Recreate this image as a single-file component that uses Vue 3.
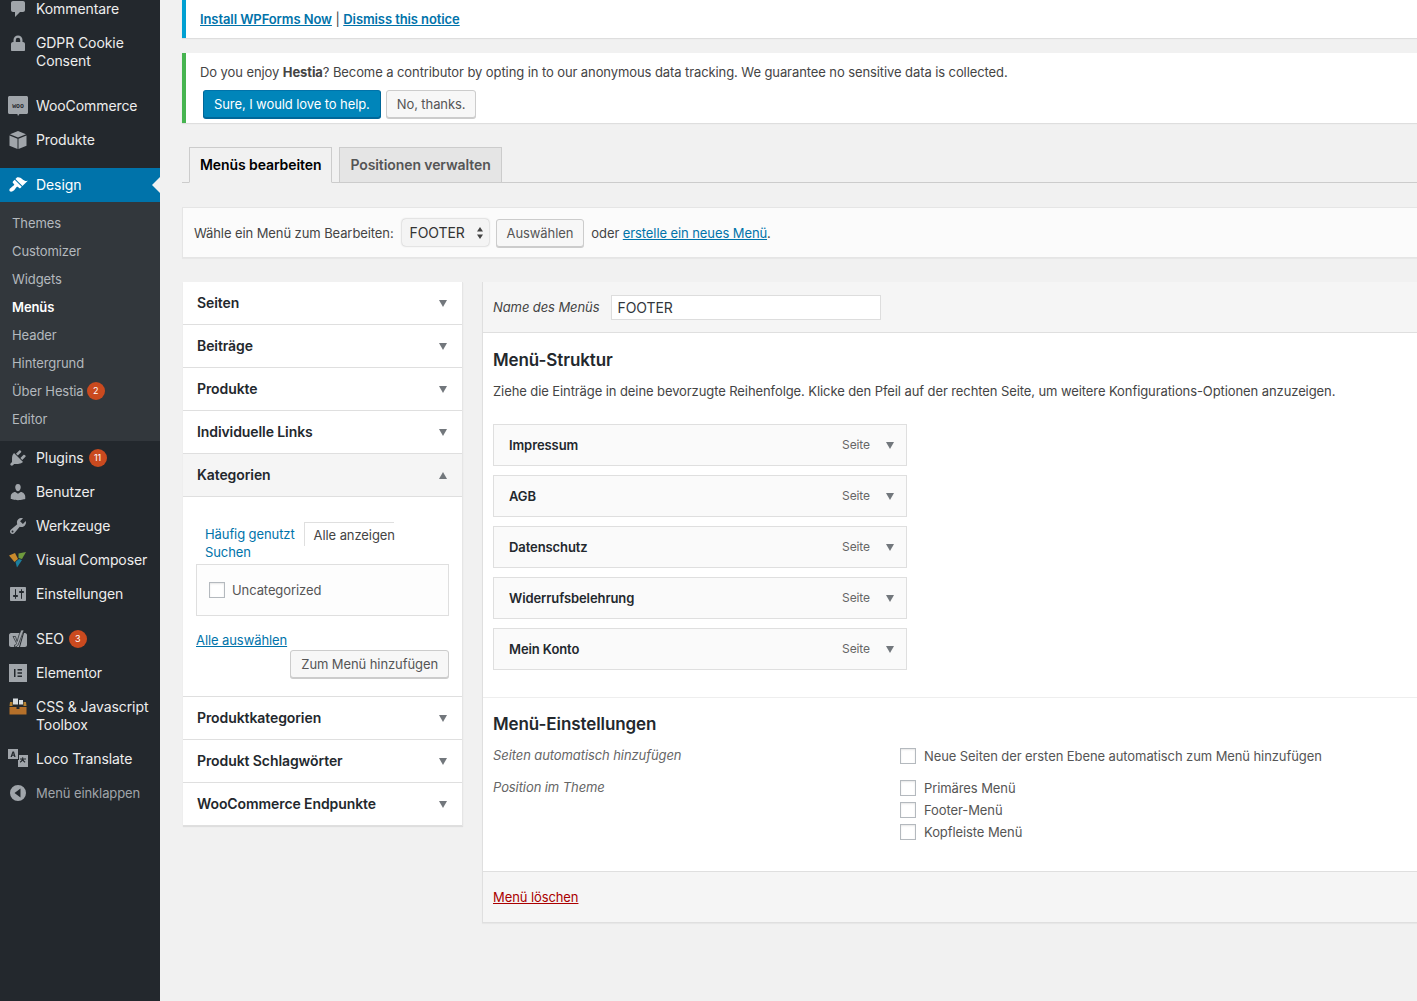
<template>
  <div class="page">
    <aside class="sidebar">
      <ul class="menu">
        <template v-for="group in menuGroups" :key="group[0].label">
          <li
            v-for="item in group"
            :key="item.label"
            class="menu-item"
            :class="{ current: item.current, muted: item.muted }"
          >
            <span class="menu-icon">
              <svg v-if="item.path" viewBox="0 0 20 20" width="20" height="20"><path :d="item.path" /></svg>
              <svg v-else-if="item.icon === 'lock'" viewBox="0 0 20 20" width="20" height="20">
                <path d="M5.500 9V7a4.500 4.500 0 0 1 9 0v2h.5c1 0 2 .8 2 2v6c0 .6-.4 1-1 1H4c-.6 0-1-.4-1-1v-6c0-1.200 1-2 2-2zm2.300 0h4.400V7a2.200 2.200 0 0 0-4.400 0z" />
              </svg>
              <svg v-else-if="item.icon === 'woo'" viewBox="0 0 20 20" width="20" height="20">
                <path d="M1.500 0h17c.8 0 1.500.7 1.500 1.500v15c0 .8-.7 1.500-1.500 1.500H11.500l-1.500 2-.7-2H1.500C.7 18 0 17.300 0 16.500v-15C0 .7.700 0 1.500 0z" />
                <text x="10" y="11.500" text-anchor="middle" class="woo-text">woo</text>
              </svg>
              <svg v-else-if="item.icon === 'box'" viewBox="0 0 20 20" width="20" height="20">
                <path d="M10 1l8 3.200L10 7.400 2 4.200zM1.500 5.500l8 3.200V19l-8-3.200zM18.500 5.500l-8 3.200V19l8-3.200z" />
              </svg>
              <svg v-else-if="item.icon === 'vc'" viewBox="0 0 20 20" width="20" height="20">
                <path fill="#c98a2c" d="M1 5.500L7 3l3 6-3.500 3z" />
                <path fill="#6f9a3d" d="M10.500 3.500L18 2l-4 7-3.500-1z" />
                <path fill="#1d7f9e" d="M7.500 12l3.500-3 3 1-5 7.500z" />
              </svg>
              <svg v-else-if="item.icon === 'yoast'" viewBox="0 0 20 20" width="20" height="20">
                <path d="M3 4h12l-4 14H3c-1 0-2-1-2-2V6c0-1 1-2 2-2zM16 4h1c1 0 2 1 2 2v10c0 1-1 2-2 2h-5z" />
                <path class="yoast-y" d="M5 7.500h2.500l1.600 5L11 6l2-5h3l-5.500 14c-.7 1.800-1.800 3-4 3v-2c1.200 0 1.800-.5 2.100-1.700z" />
              </svg>
              <svg v-else-if="item.icon === 'elementor'" viewBox="0 0 20 20" width="20" height="20">
                <path fill-rule="evenodd" d="M1 1h18v18H1zM6 6v8h1.500V6zm3.500 0v1.500H14V6zm0 3.200v1.600H14V9.200zm0 3.300V14H14v-1.500z" />
              </svg>
              <svg v-else-if="item.icon === 'toolbox'" viewBox="0 0 20 20" width="20" height="20">
                <path fill="#d7dce0" d="M5 1.500h5v6H5zM11 3h4v4.500h-4z" />
                <path fill="#b5802f" d="M2 5h2.500v4H15.500V5H18l.5 4H1.500z" />
                <path fill="#b5702a" d="M1.500 10h7v2h3v-2h7v7.500h-17z" />
              </svg>
              <svg v-else-if="item.icon === 'loco'" viewBox="0 0 20 20" width="20" height="20">
                <path fill-rule="evenodd" d="M0 0h10v10H0zM2.500 8h1.400l.4-1.300h1.600L6.300 8h1.300L6 2.500H4.500zM4.600 5.700l.5-1.800.5 1.800z" />
                <path fill-rule="evenodd" d="M11 6h9v12h-10v-7h1zM12 9.500v1h1.800c-.3 1-1 1.800-2 2.300l.5.9c1-.5 1.800-1.200 2.300-2 .5.800 1.300 1.500 2.300 2l.5-.9c-1-.5-1.700-1.300-2-2.300H18v-1h-2.800V8.300h-1v1.200z" />
              </svg>
              <svg v-else-if="item.icon === 'collapse'" viewBox="0 0 20 20" width="20" height="20">
                <path fill-rule="evenodd" d="M10 2a8 8 0 1 1 0 16 8 8 0 0 1 0-16zm2.500 3.500L6.500 10l6 4.500z" />
              </svg>
            </span>
            <span class="menu-label">{{ item.label }}</span>
            <span v-if="item.badge" class="badge">{{ item.badge }}</span>
            <ul v-if="item.current" class="submenu">
              <li
                v-for="sub in submenu"
                :key="sub.label"
                :class="{ active: sub.active }"
              >
                {{ sub.label }}<span v-if="sub.badge" class="badge sub-badge">{{ sub.badge }}</span>
              </li>
            </ul>
          </li>
        </template>
      </ul>
    </aside>

    <main class="content">
      <div class="notice notice-blue">
        <p><a href="#" class="strong">Install WPForms Now</a> | <a href="#" class="strong">Dismiss this notice</a></p>
      </div>

      <div class="notice notice-green">
        <p>Do you enjoy <b>Hestia</b>? Become a contributor by opting in to our anonymous data tracking. We guarantee no sensitive data is collected.</p>
        <div class="notice-actions">
          <button class="btn btn-primary">Sure, I would love to help.</button>
          <button class="btn">No, thanks.</button>
        </div>
      </div>

      <div class="tabs">
        <span class="tab active">Menüs bearbeiten</span>
        <span class="tab">Positionen verwalten</span>
      </div>

      <div class="manage">
        <span>Wähle ein Menü zum Bearbeiten:</span>
        <span class="select">FOOTER
          <svg viewBox="0 0 8 14" width="8" height="14"><path d="M4 1l3 4.500H1zM4 13L1 8.500h6z" /></svg>
        </span>
        <button class="btn">Auswählen</button>
        <span class="manage-or">oder <a href="#">erstelle ein neues Menü</a>.</span>
      </div>

      <div class="columns">
        <section class="accordion">
          <template v-for="section in sections" :key="section.title">
            <div class="acc-row" :class="{ open: section.open }">
              <span>{{ section.title }}</span>
              <i class="arrow" :class="{ up: section.open }"></i>
            </div>
            <div v-if="section.open" class="acc-body">
              <div class="cat-tabs">
                <a href="#" class="cat-link">Häufig genutzt</a>
                <span class="cat-tab">Alle anzeigen</span>
                <a href="#" class="cat-link cat-search">Suchen</a>
              </div>
              <div class="cat-panel">
                <label class="check-row"><span class="checkbox"></span>Uncategorized</label>
              </div>
              <a href="#" class="select-all">Alle auswählen</a>
              <div class="add-row"><button class="btn">Zum Menü hinzufügen</button></div>
            </div>
          </template>
        </section>

        <section class="editor">
          <header class="editor-head">
            <em>Name des Menüs</em>
            <span class="name-input">FOOTER</span>
          </header>

          <div class="editor-body">
            <h3>Menü-Struktur</h3>
            <p class="hint">Ziehe die Einträge in deine bevorzugte Reihenfolge. Klicke den Pfeil auf der rechten Seite, um weitere Konfigurations-Optionen anzuzeigen.</p>

            <ul class="items">
              <li v-for="entry in entries" :key="entry" class="item">
                <b>{{ entry }}</b>
                <span class="item-type">Seite</span>
                <i class="arrow"></i>
              </li>
            </ul>

            <div class="settings">
              <h3>Menü-Einstellungen</h3>
              <div class="setting-row first">
                <em>Seiten automatisch hinzufügen</em>
                <div class="setting-options">
                  <label class="check-row"><span class="checkbox"></span>Neue Seiten der ersten Ebene automatisch zum Menü hinzufügen</label>
                </div>
              </div>
              <div class="setting-row">
                <em>Position im Theme</em>
                <div class="setting-options">
                  <label v-for="pos in positions" :key="pos" class="check-row"><span class="checkbox"></span>{{ pos }}</label>
                </div>
              </div>
            </div>
          </div>

          <footer class="editor-foot">
            <a href="#" class="delete">Menü löschen</a>
          </footer>
        </section>
      </div>
    </main>
  </div>
</template>

<script setup>
const menuGroups = [
  [
    { label: 'Kommentare', path: 'M5 2h10c1.100 0 2 .9 2 2v7c0 1.100-.9 2-2 2h-3l-5 5v-5H5c-1.100 0-2-.9-2-2V4c0-1.100.9-2 2-2z' },
    { label: 'GDPR Cookie Consent', icon: 'lock' }
  ],
  [
    { label: 'WooCommerce', icon: 'woo' },
    { label: 'Produkte', icon: 'box' }
  ],
  [
    { label: 'Design', current: true, path: 'M14.480 11.060L7.410 3.990l1.500-1.500c.5-.56 2.300-.47 3.510.32 1.210.8 1.430 1.280 2.910 2.100 1.180.64 2.450 1.260 4.450.85zm-.71.71L6.700 4.700 4.930 6.470c-.39.39-.39 1.020 0 1.410l1.060 1.060c.39.39.39 1.030 0 1.420-.6.6-1.430 1.110-2.210 1.690-.35.26-.7.53-1.010.84C1.430 13.230.91 15.240 1.820 16.170c.92.92 2.940.4 4.290-.95.31-.31.58-.66.84-1.010.58-.78 1.090-1.610 1.690-2.210.39-.39 1.030-.39 1.420 0l1.060 1.060c.39.39 1.020.39 1.410 0z' },
    { label: 'Plugins', badge: 11, path: 'M13.110 4.360L9.870 7.600 8 5.730l3.240-3.240c.35-.34 1.050-.2 1.560.32.52.51.66 1.210.31 1.550zm-8 1.770l.91-1.120 9.010 9.010-1.190.84c-.71.71-2.630 1.160-3.820 1.160H6.140L4.900 17.260c-.59.59-1.540.59-2.120 0-.59-.58-.59-1.530 0-2.120l1.240-1.240v-3.880c0-1.130.4-3.190 1.090-3.890zm7.260 3.970l3.240-3.240c.34-.35 1.040-.21 1.550.31.52.51.66 1.210.31 1.550l-3.240 3.250z' },
    { label: 'Benutzer', path: 'M10 9.250c-2.270 0-2.730-3.440-2.730-3.440C7 4.020 7.820 2 9.970 2c2.160 0 2.980 2.020 2.710 3.810 0 0-.41 3.440-2.680 3.440zm0 2.570L12.720 10c2.390 0 4.520 2.330 4.520 4.530v2.490s-3.650 1.130-7.240 1.130c-3.650 0-7.240-1.130-7.240-1.130v-2.490c0-2.250 1.940-4.480 4.470-4.480z' },
    { label: 'Werkzeuge', path: 'M16.680 9.770c-1.340 1.340-3.300 1.670-4.950.99l-5.410 6.520c-.99.99-2.590.99-3.580 0s-.99-2.590 0-3.570l6.520-5.420c-.68-1.650-.35-3.610.99-4.950 1.280-1.280 3.120-1.620 4.720-1.060l-2.890 2.890 2.820 2.820 2.860-2.870c.53 1.580.18 3.390-1.080 4.650zM3.810 16.210c.4.39 1.040.39 1.430 0 .4-.4.4-1.040 0-1.430-.39-.4-1.030-.4-1.430 0-.39.39-.39 1.030 0 1.430z' },
    { label: 'Visual Composer', icon: 'vc' },
    { label: 'Einstellungen', path: 'M18 16V4c0-.55-.45-1-1-1H3c-.55 0-1 .45-1 1v12c0 .55.45 1 1 1h14c.55 0 1-.45 1-1zM8 11h1c.55 0 1 .45 1 1s-.45 1-1 1H8v1.500c0 .28-.22.5-.5.5s-.5-.22-.5-.5V13H6c-.55 0-1-.45-1-1s.45-1 1-1h1V5.500c0-.28.22-.5.5-.5s.5.22.5.5V11zm5-2h-1c-.55 0-1-.45-1-1s.45-1 1-1h1V5.500c0-.28.22-.5.5-.5s.5.22.5.5V7h1c.55 0 1 .45 1 1s-.45 1-1 1h-1v5.500c0 .28-.22.5-.5.5s-.5-.22-.5-.5V9z' }
  ],
  [
    { label: 'SEO', badge: 3, icon: 'yoast' },
    { label: 'Elementor', icon: 'elementor' },
    { label: 'CSS & Javascript Toolbox', icon: 'toolbox' },
    { label: 'Loco Translate', icon: 'loco' },
    { label: 'Menü einklappen', icon: 'collapse', muted: true }
  ]
]

const submenu = [
  { label: 'Themes' },
  { label: 'Customizer' },
  { label: 'Widgets' },
  { label: 'Menüs', active: true },
  { label: 'Header' },
  { label: 'Hintergrund' },
  { label: 'Über Hestia', badge: 2 },
  { label: 'Editor' }
]

const sections = [
  { title: 'Seiten' },
  { title: 'Beiträge' },
  { title: 'Produkte' },
  { title: 'Individuelle Links' },
  { title: 'Kategorien', open: true },
  { title: 'Produktkategorien' },
  { title: 'Produkt Schlagwörter' },
  { title: 'WooCommerce Endpunkte' }
]

const entries = ['Impressum', 'AGB', 'Datenschutz', 'Widerrufsbelehrung', 'Mein Konto']
const positions = ['Primäres Menü', 'Footer-Menü', 'Kopfleiste Menü']
</script>

<style>
html,
body {
  margin: 0;
  background: #f1f1f1;
}
</style>

<style scoped>
* {
  box-sizing: border-box;
}
.page {
  display: flex;
  height: 1001px;
  overflow: hidden;
  font-family: Inter, "Noto Sans", sans-serif;
  font-size: 13px;
  letter-spacing: -.09px;
  line-height: 18px;
  color: #444;
  background: #f1f1f1;
}
ul {
  list-style: none;
  margin: 0;
  padding: 0;
}
p {
  margin: 0;
}
a {
  color: #0073aa;
}
.sidebar {
  flex: 0 0 160px;
  background: #23282d;
  overflow: hidden;
}
.menu {
  margin-top: -8px;
}
.menu-item {
  display: flex;
  flex-wrap: wrap;
  align-items: flex-start;
  padding: 8px 0 8px 36px;
  position: relative;
  font-size: 14px;
  color: #eee;
}
.menu-item:nth-child(3),
.menu-item:nth-child(5),
.menu-item:nth-child(11) {
  margin-top: 11px;
}
.menu-label {
  max-width: 118px;
}
.menu-icon {
  position: absolute;
  left: 8px;
  top: 7px;
  width: 20px;
  height: 20px;
  fill: #a0a5aa;
}
.woo-text {
  font-size: 6.500px;
  font-weight: 700;
  fill: #23282d;
  font-family: "Liberation Mono", monospace;
}
.yoast-y {
  fill: #a0a5aa;
  stroke: #23282d;
  stroke-width: .7;
}
.menu-item.current {
  color: #fff;
  background: #0073aa;
  padding: 8px 0 0;
}
.menu-item.current .menu-icon {
  fill: #fff;
}
.menu-item.current .menu-label {
  padding-left: 36px;
  max-width: none;
  height: 26px;
}
.menu-item.current::after {
  content: "";
  position: absolute;
  right: 0;
  top: 9px;
  border: 8px solid transparent;
  border-right-color: #f1f1f1;
}
.menu-item.muted {
  color: #a0a5aa;
  font-size: 13px;
}
.submenu {
  width: 100%;
  padding: 7px 0 8px;
  background: #32373c;
  color: #b4b9be;
  font-size: 13px;
}
.submenu li {
  display: flex;
  align-items: center;
  height: 28px;
  padding-left: 12px;
}
.submenu li.active {
  color: #fff;
  font-weight: 600;
}
.badge {
  display: inline-block;
  min-width: 18px;
  height: 18px;
  margin-left: 5px;
  padding: 0 5px;
  border-radius: 9px;
  background: #ca4a1f;
  color: #fff;
  font-size: 9px;
  line-height: 18px;
  text-align: center;
}
.sub-badge {
  margin: 0 0 0 3px;
  padding: 0;
}
.content {
  flex: 1;
  min-width: 0;
  padding-left: 22px;
}
.notice {
  background: #fff;
  border-left: 4px solid #00a0d2;
  box-shadow: 0 1px 1px rgba(0, 0, 0, .08);
  padding: 0 14px;
}
.notice-blue {
  height: 38px;
  padding-top: 10px;
}
.strong {
  font-weight: 600;
}
.notice-green {
  margin-top: 15px;
  border-left-color: #46b450;
  padding-top: 10px;
  padding-bottom: 4px;
  height: 70px;
}
.notice-actions {
  display: flex;
  gap: 5px;
  padding: 9px 0 0 3px;
}
.btn {
  height: 28px;
  padding: 0 10px;
  border: 1px solid #ccc;
  border-radius: 3px;
  background: #f7f7f7;
  box-shadow: 0 1px 0 #ccc;
  color: #555;
  font: inherit;
  letter-spacing: inherit;
  white-space: nowrap;
}
.btn-primary {
  background: #0085ba;
  border-color: #0073aa #006799 #006799;
  box-shadow: 0 1px 0 #006799;
  color: #fff;
}
.tabs {
  display: flex;
  gap: 7px;
  margin-top: 24px;
  padding-left: 7px;
  border-bottom: 1px solid #ccc;
  height: 36px;
}
.tab {
  height: 36px;
  padding: 0 10px;
  border: 1px solid #ccc;
  background: #e5e5e5;
  color: #555;
  font-size: 14px;
  font-weight: 600;
  line-height: 34px;
}
.tab.active {
  background: #f1f1f1;
  border-bottom-color: #f1f1f1;
  color: #000;
}
.manage {
  display: flex;
  align-items: center;
  height: 51px;
  margin-top: 24px;
  padding-left: 11px;
  background: #fbfbfb;
  border: 1px solid #e5e5e5;
  border-right: 0;
  box-shadow: 0 1px 1px rgba(0, 0, 0, .04);
}
.select {
  display: flex;
  align-items: center;
  justify-content: space-between;
  width: 87px;
  height: 27px;
  margin: 0 7px 0 8px;
  padding: 0 5px 0 8px;
  border-radius: 4px;
  background: #f4f4f4;
  box-shadow: 0 0 2px rgba(0, 0, 0, .35);
  color: #333;
  font-size: 14px;
}
.select svg {
  fill: #444;
}
.manage-or {
  margin-left: 7px;
}
.columns {
  display: flex;
  align-items: flex-start;
  gap: 19px;
  margin-top: 24px;
  padding-left: 1px;
}
.accordion {
  flex: 0 0 280px;
  background: #fff;
  border: 1px solid #e5e5e5;
  border-width: 0 1px 0 0;
  box-shadow: 0 1px 1px rgba(0, 0, 0, .08);
}
.acc-row {
  display: flex;
  align-items: center;
  justify-content: space-between;
  height: 43px;
  padding: 0 15px 0 14px;
  border-bottom: 1px solid #dfdfdf;
  color: #23282d;
  font-size: 14px;
  font-weight: 600;
}
.acc-row.open {
  background: #f5f5f5;
}
.arrow {
  width: 0;
  height: 0;
  border-left: 4.500px solid transparent;
  border-right: 4.500px solid transparent;
  border-top: 7px solid #72777c;
}
.arrow.up {
  border-top: 0;
  border-bottom: 7px solid #72777c;
}
.acc-body {
  height: 200px;
  padding: 25px 13px 0;
  border-bottom: 1px solid #dfdfdf;
}
.cat-tabs {
  display: flex;
  flex-wrap: wrap;
  width: 200px;
  padding-left: 9px;
  line-height: 18px;
}
.cat-link {
  text-decoration: none;
  margin-right: 9px;
  padding-top: 3px;
}
.cat-tab {
  padding: 3px 0 0 9px;
  border-top: 1px solid #dfdfdf;
  border-left: 1px solid #dfdfdf;
  width: 90px;
  white-space: nowrap;
  height: 24px;
  color: #444;
}
.cat-search {
  flex-basis: 100%;
  padding-top: 0;
  margin-top: -3px;
}
.cat-panel {
  display: flex;
  align-items: center;
  height: 52px;
  margin-top: 3px;
  padding-left: 12px;
  background: #fdfdfd;
  border: 1px solid #dfdfdf;
}
.check-row {
  display: flex;
  align-items: center;
  gap: 8px;
  height: 22px;
  color: #555;
}
.cat-panel .check-row {
  gap: 7px;
}
.checkbox {
  flex: none;
  width: 16px;
  height: 16px;
  border: 1px solid #b4b9be;
  background: #fff;
  box-shadow: inset 0 1px 2px rgba(0, 0, 0, .1);
}
.select-all {
  display: block;
  margin-top: 15px;
}
.add-row {
  display: flex;
  justify-content: flex-end;
  margin-top: 1px;
}
.editor {
  flex: 1;
  min-width: 0;
  background: #fff;
  border-left: 1px solid #dfdfdf;
  border-bottom: 1px solid #dfdfdf;
  box-shadow: 0 1px 1px rgba(0, 0, 0, .04);
}
.editor-head {
  display: flex;
  align-items: center;
  gap: 12px;
  height: 51px;
  padding-left: 10px;
  background: #f5f5f5;
  border-bottom: 1px solid #dfdfdf;
  color: #444;
}
.name-input {
  width: 270px;
  height: 25px;
  padding-left: 5px;
  background: #fff;
  border: 1px solid #ddd;
  color: #32373c;
  font-size: 14px;
  line-height: 23px;
}
.editor-body {
  height: 538px;
  padding: 0 0 0 10px;
  overflow: hidden;
}
h3 {
  margin: 0;
  color: #23282d;
  font-size: 17px;
  font-weight: 600;
  line-height: 24px;
}
.editor-body > h3 {
  margin-top: 15px;
}
.hint {
  margin-top: 10px;
  white-space: nowrap;
}
.items {
  display: flex;
  flex-direction: column;
  gap: 9px;
  width: 414px;
  margin-top: 24px;
}
.item {
  display: flex;
  align-items: center;
  height: 42px;
  padding: 0 12px 0 15px;
  background: #fafafa;
  border: 1px solid #dfdfdf;
  color: #23282d;
}
.item b {
  flex: 1;
  font-weight: 600;
}
.item-type {
  margin-right: 16px;
  color: #666;
  font-size: 12px;
}
.settings {
  margin: 27px 0 0 -10px;
  padding: 14px 0 0 10px;
  border-top: 1px solid #eee;
}
.setting-row {
  display: flex;
}
.setting-row.first {
  margin-top: 8px;
}
.setting-row em {
  flex: 0 0 407px;
  color: #666;
  line-height: 22px;
}
.setting-options {
  display: flex;
  flex-direction: column;
  padding-top: 1px;
}
.setting-row + .setting-row {
  margin-top: 9px;
}
.editor-foot {
  display: flex;
  align-items: center;
  height: 51px;
  padding-left: 10px;
  background: #f5f5f5;
  border-top: 1px solid #dfdfdf;
}
.delete {
  color: #a00;
}
</style>
